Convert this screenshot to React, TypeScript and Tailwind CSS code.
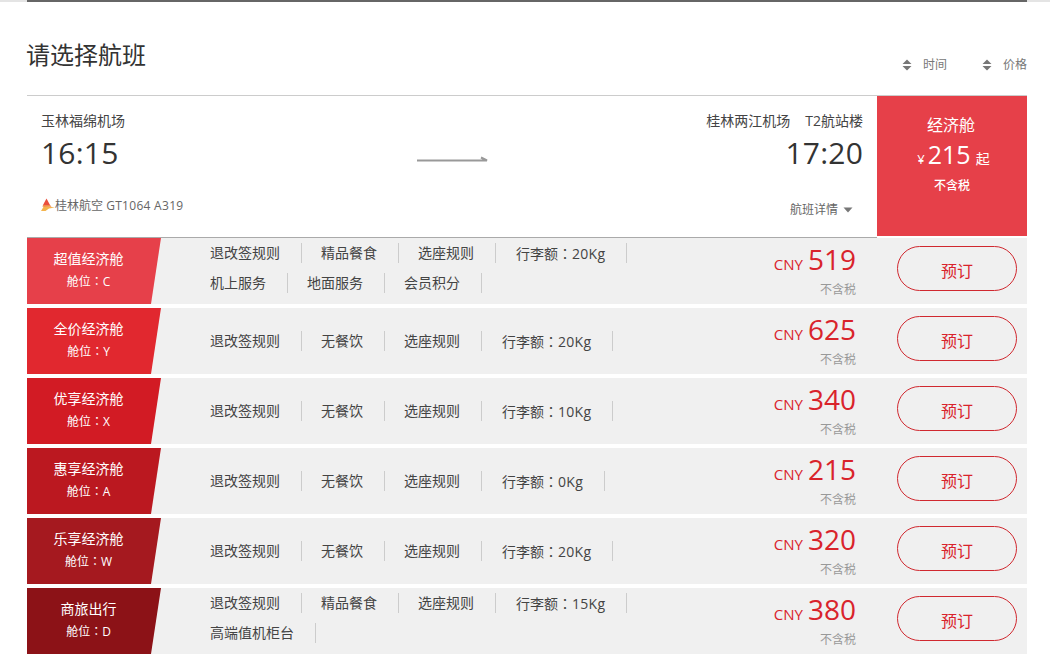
import React from "react";

const font = { fontFamily: '"Open Sans","Noto Sans CJK SC",sans-serif' };

type Row = { name: string; cls: string; price: string; color: string; lines: string[][]; };

const rows: Row[] = [
  { name: "超值经济舱", cls: "C", price: "519", color: "bg-[#e6404a]", lines: [["退改签规则", "精品餐食", "选座规则", "行李额：20Kg"], ["机上服务", "地面服务", "会员积分"]] },
  { name: "全价经济舱", cls: "Y", price: "625", color: "bg-[#e1282f]", lines: [["退改签规则", "无餐饮", "选座规则", "行李额：20Kg"]] },
  { name: "优享经济舱", cls: "X", price: "340", color: "bg-[#d21b24]", lines: [["退改签规则", "无餐饮", "选座规则", "行李额：10Kg"]] },
  { name: "惠享经济舱", cls: "A", price: "215", color: "bg-[#bb1820]", lines: [["退改签规则", "无餐饮", "选座规则", "行李额：0Kg"]] },
  { name: "乐享经济舱", cls: "W", price: "320", color: "bg-[#a5191f]", lines: [["退改签规则", "无餐饮", "选座规则", "行李额：20Kg"]] },
  { name: "商旅出行", cls: "D", price: "380", color: "bg-[#8c1217]", lines: [["退改签规则", "精品餐食", "选座规则", "行李额：15Kg"], ["高端值机柜台"]] },
];

const tcColon = { fontFamily: '"Noto Sans CJK TC",sans-serif' };

function Tag({ t }: { t: string }) {
  const i = t.indexOf("：");
  if (i < 0) return <>{t}</>;
  return (
    <span className="ml-px">
      {t.slice(0, i)}
      <span style={tcColon}>：</span>
      <span className="tracking-[0.3px]">{t.slice(i + 1)}</span>
    </span>
  );
}

function Sort({ label }: { label: string }) {
  return (
    <div className="flex items-center">
      <svg width="10" height="12" viewBox="0 0 10 12" className="mr-[11px]">
        <path d="M5 0.5 L9.5 5 L0.5 5 Z M0.5 7 L9.5 7 L5 11.5 Z" fill="#777" />
      </svg>
      <span className="text-[12px] leading-[16px] text-[#777]">{label}</span>
    </div>
  );
}

function CabinRow({ r }: { r: Row }) {
  return (
    <div className="flex h-[66px] bg-[#f0f0f0] mb-[4px]">
      <div className={`w-[134px] shrink-0 flex flex-col items-center pr-[11px] pt-[10px] text-white [clip-path:polygon(0_0,100%_0,124px_100%,0_100%)] ${r.color}`}>
        <div className="text-[14px] leading-[22px]">{r.name}</div>
        <div className="text-[12px] leading-[22px]">舱位<span style={tcColon}>：</span>{r.cls}</div>
      </div>
      <div className={`w-[546px] shrink-0 pl-[49px] flex flex-col gap-[10px] ${r.lines.length === 1 ? "justify-center" : "pt-[5px]"}`}>
        {r.lines.map((line, i) => (
          <div key={i} className="flex h-[20px]">
            {line.map((t, j) => (
              <div key={j} className={`h-[20px] pr-[21px] border-r border-[#ccc] text-[14px] leading-[20px] text-[#444] ${j ? "pl-[19px]" : ""}`}>
                <Tag t={t} />
              </div>
            ))}
          </div>
        ))}
      </div>
      <div className="w-[149px] shrink-0 flex flex-col items-end pt-[2px]">
        <div className="flex items-baseline text-[#d9232b]">
          <span className="text-[15px] mr-[5px]">CNY</span>
          <span className="text-[28px] leading-[38px]">{r.price}</span>
        </div>
        <div className="text-[12px] leading-[16px] mt-[4px] text-[#999]">不含税</div>
      </div>
      <div className="flex-1 pl-[41px] pt-[8px]">
        <div className="w-[120px] h-[45px] rounded-full border border-[#d0282f] flex items-center justify-center text-[16px] text-[#d9232b] pt-[4px]">
          预订
        </div>
      </div>
    </div>
  );
}

export default function App() {
  return (
    <div className="w-[1050px] h-[656px] overflow-hidden bg-white" style={font}>
      <div className="h-[2px] bg-[#e4e4e4]">
        <div className="ml-[27px] w-[1000px] h-[2px] bg-[#666]" />
      </div>
      <div className="ml-[27px] w-[1000px]">
        <div className="h-[94px] border-b border-[#ccc] flex justify-between">
          <h1 className="mt-[36px] -ml-px text-[24px] leading-[34px] text-[#333]">请选择航班</h1>
          <div className="flex gap-[35px] mt-[55px] h-[16px]">
            <Sort label="时间" />
            <Sort label="价格" />
          </div>
        </div>
        <div className="h-[142px] flex">
          <div className="w-[850px] h-[142px] border-b border-[#aaa] flex flex-col px-[14px] pt-[15px]">
            <div className="flex justify-between text-[14px] leading-[20px] text-[#444]">
              <span>玉林福绵机场</span>
              <span>桂林两江机场<span className="ml-[15px]">T2航站楼</span></span>
            </div>
            <div className="flex justify-between items-center text-[30px] tracking-[0.2px] leading-[44px] text-[#333]">
              <span>16:15</span>
              <svg width="71" height="8" viewBox="0 0 71 8" className="mt-[10px]">
                <path d="M0 6.5 H70 L64 3.5" stroke="#999" strokeWidth="2" fill="none" />
              </svg>
              <span>17:20</span>
            </div>
            <div className="flex justify-between mt-[18px]">
              <div className="flex items-center text-[12px] leading-[18px] text-[#666]">
                <svg width="14" height="14" viewBox="0 0 14 14" className="mb-[3px]">
                  <path d="M5.5 0.5 L9 7 L2 7 Z" fill="#ea4f3d" />
                  <path d="M0 13 L3 8 L14 9.5 L8 10.5 L4.5 13 Z" fill="#f4b44c" />
                  <path d="M2 7 L9 7 L10.5 8.8 L1.5 8.8 Z" fill="#f08a48" />
                </svg>
                <span>桂林航空 <span className="tracking-[0.3px]">GT1064 A319</span></span>
              </div>
              <div className="flex items-center text-[12px] leading-[18px] text-[#666] mt-[8px] mr-[10px]">
                <span>航班详情</span>
                <svg width="10" height="6" viewBox="0 0 10 6" className="ml-[5px]">
                  <path d="M0.5 0.5 H9.5 L5 5.5 Z" fill="#777" />
                </svg>
              </div>
            </div>
          </div>
          <div className="w-[150px] h-[140px] bg-[#e64049] text-white flex flex-col items-center pt-[17px]">
            <div className="text-[16px] leading-[24px] -ml-[2px]">经济舱</div>
            <div className="flex items-baseline mt-[2px] ml-[3px] leading-[30px]">
              <span className="text-[13px] mr-[3px]">¥</span>
              <span className="text-[25px]">215</span>
              <span className="text-[14px] ml-[5px]">起</span>
            </div>
            <div className="text-[12px] leading-[18px] mt-[3px] font-medium">不含税</div>
          </div>
        </div>
        <div>
          {rows.map((r) => (
            <CabinRow key={r.name} r={r} />
          ))}
        </div>
      </div>
    </div>
  );
}
